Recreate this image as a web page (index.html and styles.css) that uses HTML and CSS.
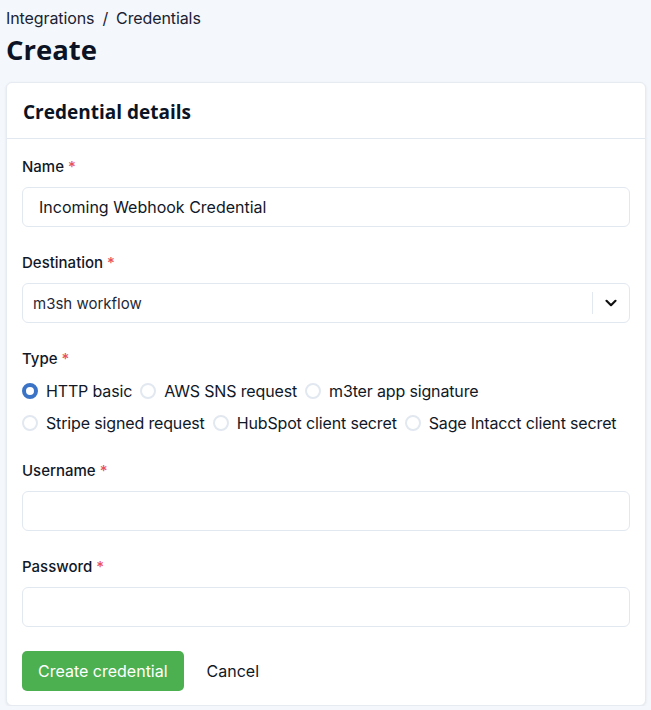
FILE: index.html
```html
<!DOCTYPE html>
<html lang="en">
<head>
<meta charset="utf-8">
<title>Create Credential</title>
<link rel="stylesheet" href="styles.css">
</head>
<body>
<div class="page">
  <nav class="crumbs"><span>Integrations</span><span class="sep">/</span><span>Credentials</span></nav>
  <h1 class="title">Create</h1>
  <section class="card">
    <header class="card-head"><h2>Credential details</h2></header>
    <div class="card-body">
      <div class="field">
        <label class="label">Name <span class="req">*</span></label>
        <div class="input"><span class="value">Incoming Webhook Credential</span></div>
      </div>
      <div class="field">
        <label class="label">Destination <span class="req">*</span></label>
        <div class="select">
          <span class="sel-value">m3sh workflow</span>
          <span class="sel-div"></span>
          <span class="sel-icon"><svg width="14" height="14" viewBox="0 0 14 14"><path d="M2.5 4.8 L7 9.2 L11.5 4.8" fill="none" stroke="#111" stroke-width="2.2" stroke-linecap="round" stroke-linejoin="round"/></svg></span>
        </div>
      </div>
      <div class="field">
        <label class="label">Type <span class="req">*</span></label>
        <div class="radios">
          <span class="radio"><span class="dot checked"></span>HTTP basic</span>
          <span class="radio"><span class="dot"></span>AWS SNS request</span>
          <span class="radio"><span class="dot"></span>m3ter app signature</span>
          <span class="radio"><span class="dot"></span>Stripe signed request</span>
          <span class="radio"><span class="dot"></span>HubSpot client secret</span>
          <span class="radio"><span class="dot"></span>Sage Intacct client secret</span>
        </div>
      </div>
      <div class="field">
        <label class="label">Username <span class="req">*</span></label>
        <div class="input"></div>
      </div>
      <div class="field">
        <label class="label">Password <span class="req">*</span></label>
        <div class="input"></div>
      </div>
      <div class="actions">
        <button class="btn-primary">Create credential</button>
        <button class="btn-link">Cancel</button>
      </div>
    </div>
  </section>
</div>
</body>
</html>
```

FILE: styles.css
```css
* { box-sizing: border-box; }
html, body { margin: 0; padding: 0; }
body {
  background: #f4f7fb;
  font-family: Inter, "Noto Sans", sans-serif;
  color: #0f172a;
}
.page { padding: 8px 5px 0 6px; }
.crumbs {
  font-size: 16px;
  line-height: 20px;
  color: #1a2233;
  display: flex;
  gap: 8px;
  letter-spacing: -0.1px;
}
.title {
  font-family: "Open Sans", "Noto Sans", sans-serif;
  font-weight: 700;
  font-size: 27.5px;
  line-height: 36px;
  margin: 4px 0 14px 0;
  color: #0b1324;
}
.card {
  background: #fff;
  border: 1px solid #e6ebf1;
  border-radius: 6px;
  box-shadow: 0 1px 3px rgba(15, 23, 42, 0.08);
}
.card-head {
  height: 56px;
  display: flex;
  align-items: center;
  padding: 2px 16px 0;
  border-bottom: 1px solid #e2e8f0;
}
.card-head h2 {
  margin: 0;
  font-family: "Open Sans", "Noto Sans", sans-serif;
  font-weight: 700;
  font-size: 19px;
  color: #0b1324;
}
.card-body { padding: 18px 15px 14px 15px; }
.field { margin-bottom: 26px; }
.label {
  display: block;
  font-size: 15px;
  line-height: 20px;
  font-weight: 500;
  color: #111827;
  margin-bottom: 10px;
}
.req { color: #e8505b; }
.input {
  height: 40px;
  border: 1px solid #e2e8f0;
  border-radius: 6px;
  display: flex;
  align-items: center;
  padding: 0 16px;
  font-size: 16px;
  color: #111827;
}
.select {
  height: 40px;
  border: 1px solid #e2e8f0;
  border-radius: 6px;
  display: flex;
  align-items: center;
  padding-left: 10px;
  font-size: 15px;
  color: #1f2937;
}
.sel-value { flex: 1; }
.sel-div { width: 1px; height: 22px; background: #e2e8f0; }
.sel-icon {
  width: 36px;
  display: flex;
  justify-content: center;
  align-items: center;
}
.radios {
  display: flex;
  flex-wrap: wrap;
  column-gap: 8px;
  row-gap: 8px;
}
.radio {
  display: flex;
  align-items: center;
  gap: 8px;
  height: 24px;
  font-size: 16px;
  letter-spacing: -0.15px;
  color: #111827;
}
.dot {
  width: 16px;
  height: 16px;
  border-radius: 50%;
  border: 2px solid #e2e8f0;
  background: #fff;
}
.dot.checked {
  border: 4.5px solid #3b74c6;
  background: #fff;
}
.actions {
  display: flex;
  align-items: center;
  gap: 8px;
  margin-top: -2px;
}
.btn-primary {
  font-family: Inter, "Noto Sans", sans-serif;
  height: 40px;
  padding: 0 16px;
  border: none;
  border-radius: 5px;
  background: #4caf50;
  color: #fff;
  font-size: 16px;
}
.btn-link {
  font-family: Inter, "Noto Sans", sans-serif;
  height: 40px;
  padding: 0 16px 0 15px;
  border: none;
  background: transparent;
  color: #111827;
  font-size: 16px;
}
```
